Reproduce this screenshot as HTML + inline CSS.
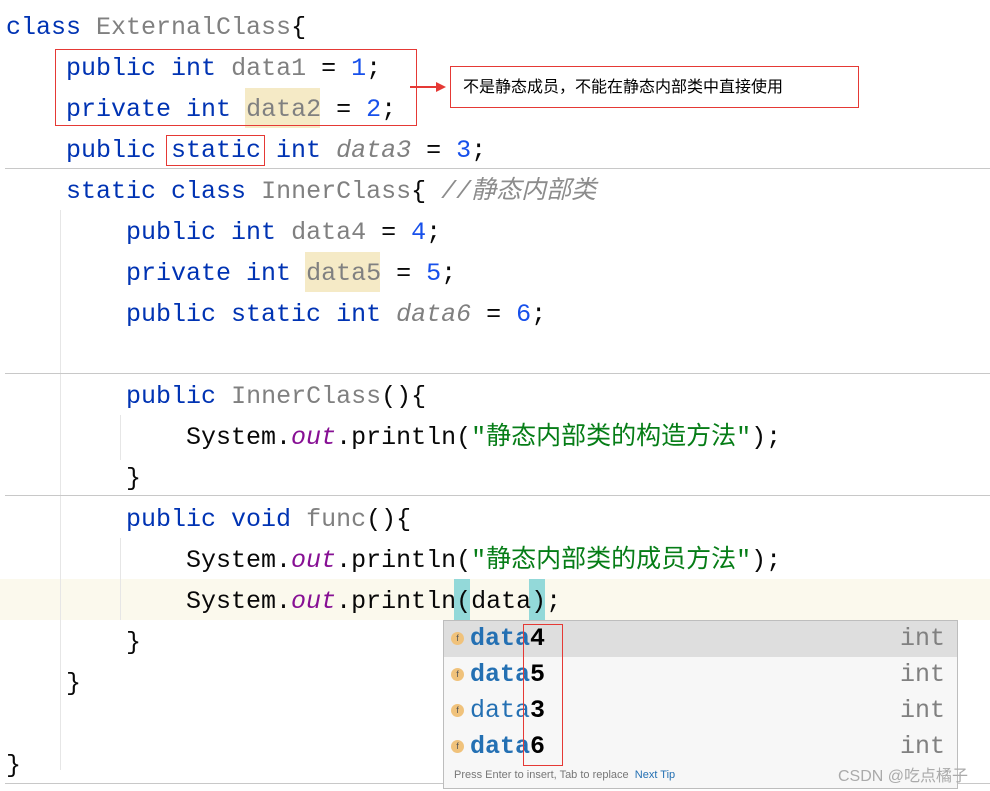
<!DOCTYPE html>
<html><head><meta charset="utf-8"><style>
body{margin:0;width:990px;height:791px;background:#fff;position:relative;overflow:hidden;font-family:"Liberation Mono","Noto Sans CJK SC",monospace;}
.l{position:absolute;left:6px;height:41px;line-height:41px;font-size:25px;white-space:pre;color:#080808;margin-top:2px}
.k{color:#0033b3}.g{color:#808080}.n{color:#1750eb}.s{color:#067d17}.o{color:#871094;font-style:italic}.i{font-style:italic;color:#808080}.c{color:#8c8c8c;font-style:italic}
.sep{position:absolute;left:5px;right:0;height:1px;background:#c8c8c8}
.guide{position:absolute;width:1px;background:#e6e6e6}
.box{position:absolute;border:1px solid #e53935}
.pop{position:absolute;left:443px;top:620px;width:513px;height:167px;background:#f7f7f7;border:1px solid #bdbdbd;}
.row{position:absolute;left:0;width:513px;height:36px;line-height:36px;font-size:25px;font-family:"Liberation Mono",monospace}
.row .nm{position:absolute;left:26px;color:#2470b3;font-weight:bold}
.row .nm b{color:#000}
.row .ty{position:absolute;right:12px;color:#808080}
.ic{position:absolute;left:7px;top:11px;width:13px;height:13px;border-radius:50%;background:#f0c27b;font-size:9px;line-height:13px;text-align:center;color:#555;font-family:"Liberation Sans",sans-serif}
</style></head><body>
<div style="position:absolute;left:0;top:579px;width:990px;height:41px;background:#fbf9ed"></div>
<div class="guide" style="left:60px;top:210px;height:560px"></div>
<div class="guide" style="left:120px;top:415px;height:45px"></div>
<div class="guide" style="left:120px;top:538px;height:82px"></div>
<div class="sep" style="top:168px"></div>
<div class="sep" style="top:373px"></div>
<div class="sep" style="top:495px"></div>
<div class="sep" style="top:783px"></div>
<div style="position:absolute;left:454px;top:579px;width:16px;height:41px;background:#93d9d9"></div>
<div style="position:absolute;left:529px;top:579px;width:16px;height:41px;background:#93d9d9"></div>
<div style="position:absolute;left:245px;top:88px;width:75px;height:40px;background:#f5eac6"></div>
<div style="position:absolute;left:305px;top:252px;width:75px;height:40px;background:#f5eac6"></div>

<div class="l" style="top:5px"><span class="k">class</span> <span class="g">ExternalClass</span>{</div>
<div class="l" style="top:46px">    <span class="k">public int</span> <span class="g">data1</span> = <span class="n">1</span>;</div>
<div class="l" style="top:87px">    <span class="k">private int</span> <span class="g">data2</span> = <span class="n">2</span>;</div>
<div class="l" style="top:128px">    <span class="k">public static int</span> <span class="i">data3</span> = <span class="n">3</span>;</div>
<div class="l" style="top:169px">    <span class="k">static class</span> <span class="g">InnerClass</span>{ <span class="c">//静态内部类</span></div>
<div class="l" style="top:210px">        <span class="k">public int</span> <span class="g">data4</span> = <span class="n">4</span>;</div>
<div class="l" style="top:251px">        <span class="k">private int</span> <span class="g">data5</span> = <span class="n">5</span>;</div>
<div class="l" style="top:292px">        <span class="k">public static int</span> <span class="i">data6</span> = <span class="n">6</span>;</div>
<div class="l" style="top:374px">        <span class="k">public</span> <span class="g">InnerClass</span>(){</div>
<div class="l" style="top:415px">            System.<span class="o">out</span>.println(<span class="s">"静态内部类的构造方法"</span>);</div>
<div class="l" style="top:456px">        }</div>
<div class="l" style="top:497px">        <span class="k">public void</span> <span class="g">func</span>(){</div>
<div class="l" style="top:538px">            System.<span class="o">out</span>.println(<span class="s">"静态内部类的成员方法"</span>);</div>
<div class="l" style="top:579px">            System.<span class="o">out</span>.println(data);</div>
<div class="l" style="top:620px">        }</div>
<div class="l" style="top:661px">    }</div>
<div class="l" style="top:743px">}</div>

<div class="box" style="left:55px;top:49px;width:360px;height:75px"></div>
<div class="box" style="left:166px;top:135px;width:97px;height:29px"></div>
<div style="position:absolute;left:410px;top:86px;width:30px;height:2px;background:#e53935"></div>
<div style="position:absolute;left:436px;top:82px;border-left:10px solid #e53935;border-top:5px solid transparent;border-bottom:5px solid transparent"></div>
<div class="box" style="left:450px;top:66px;width:409px;height:42px;font-family:'Liberation Sans','Noto Sans CJK SC',sans-serif;font-size:16px;line-height:42px;padding-left:12px;box-sizing:border-box;color:#000">不是静态成员，不能在静态内部类中直接使用</div>

<div class="pop">
<div class="row" style="top:0;background:#dedede"><span class="ic">f</span><span class="nm">data<b>4</b></span><span class="ty">int</span></div>
<div class="row" style="top:36px"><span class="ic">f</span><span class="nm">data<b>5</b></span><span class="ty">int</span></div>
<div class="row" style="top:72px"><span class="ic">f</span><span class="nm" style="font-weight:normal">data<b>3</b></span><span class="ty">int</span></div>
<div class="row" style="top:108px"><span class="ic">f</span><span class="nm">data<b>6</b></span><span class="ty">int</span></div>
<div style="position:absolute;left:10px;top:148px;font-family:'Liberation Sans',sans-serif;font-size:11px;color:#777;white-space:nowrap">Press Enter to insert, Tab to replace&nbsp; <span style="color:#2470b3">Next Tip</span></div>
</div>
<div style="position:absolute;left:838px;top:762px;font-family:'Liberation Sans','Noto Sans CJK SC',sans-serif;font-size:16px;color:#aaa;white-space:nowrap">CSDN @吃点橘子</div>
<div class="box" style="left:523px;top:624px;width:38px;height:140px"></div>
</body></html>
